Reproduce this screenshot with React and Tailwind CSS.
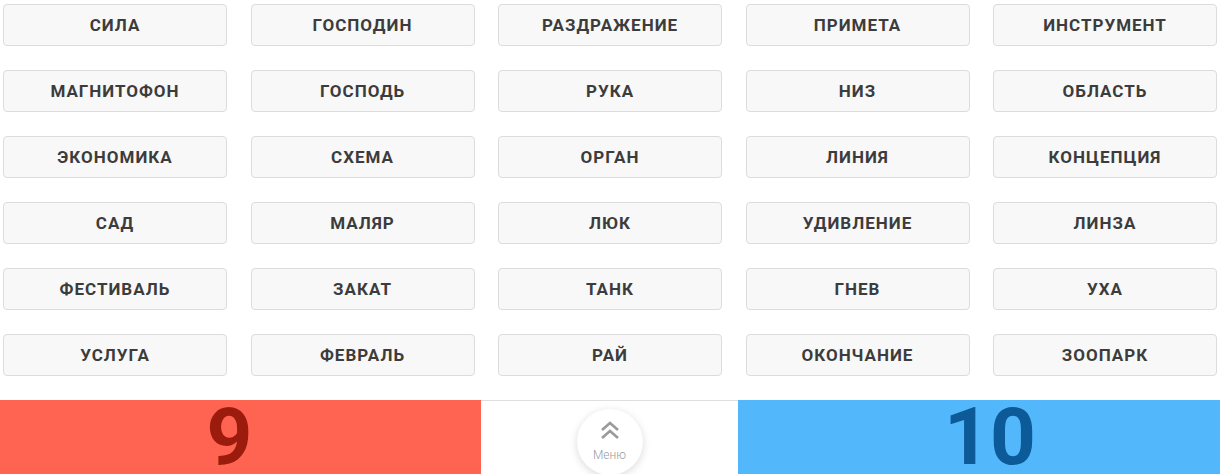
import { useState } from 'react';

const words = [
  'Сила', 'Господин', 'Раздражение', 'Примета', 'Инструмент',
  'Магнитофон', 'Господь', 'Рука', 'Низ', 'Область',
  'Экономика', 'Схема', 'Орган', 'Линия', 'Концепция',
  'Сад', 'Маляр', 'Люк', 'Удивление', 'Линза',
  'Фестиваль', 'Закат', 'Танк', 'Гнев', 'Уха',
  'Услуга', 'Февраль', 'Рай', 'Окончание', 'Зоопарк',
];

export default function App() {
  const [score] = useState({ red: 9, blue: 10 });

  return (
    <div className="w-[1220px] h-[474px] overflow-hidden bg-white font-['Roboto',sans-serif]">
      {/* Word cards */}
      <div className="grid grid-cols-[repeat(5,224px)] gap-x-[23.5px] gap-y-[24px] pl-[3px] pt-[4px]">
        {words.map((w) => (
          <button
            key={w}
            className="h-[42px] rounded-[4px] border border-[#dcdcdc] bg-[#f8f8f8] pt-[2px] text-[17px] font-bold uppercase tracking-[1px] text-[#3c3c3c]"
          >
            {w}
          </button>
        ))}
      </div>

      {/* Score bar */}
      <div className="mt-[24px] flex h-[76px]">
        <div className="flex w-[481px] justify-center bg-[#ff6452] pr-[22px]">
          <span className="mt-[-3px] text-[80px] font-bold leading-none text-[#9b1c0c]">{score.red}</span>
        </div>
        <div className="flex w-[257px] justify-center border-t border-[#dedede] bg-white">
          <div className="mt-[8px] flex h-[66px] w-[66px] flex-col items-center rounded-full bg-white shadow-[0_2px_8px_rgba(0,0,0,0.15)]">
            <svg width="22" height="20" viewBox="0 0 22 20" className="mt-[12px]" fill="none" stroke="#9a9a9a" strokeWidth="2.6">
              <polyline points="3,9 11,2 19,9" />
              <polyline points="3,17 11,10 19,17" />
            </svg>
            <span className="mt-[5px] text-[12px] font-light text-[#9a9a9a]">Меню</span>
          </div>
        </div>
        <div className="flex flex-1 justify-center bg-[#52b7fb] pl-[22px]">
          <span className="mt-[-3px] text-[80px] font-bold leading-none text-[#0d5a98]">{score.blue}</span>
        </div>
      </div>
    </div>
  );
}
